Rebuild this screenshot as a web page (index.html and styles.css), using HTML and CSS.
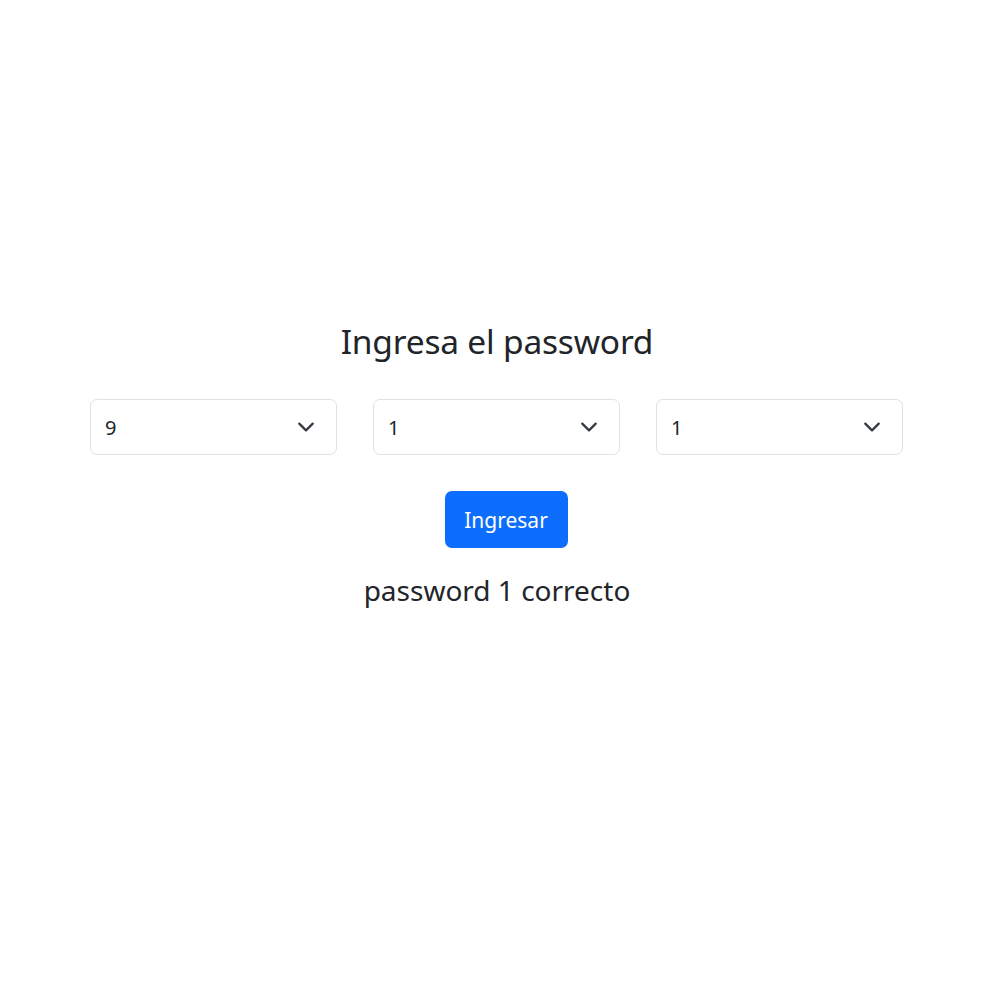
FILE: index.html
```
<!DOCTYPE html>
<html lang="es">
<head>
<meta charset="utf-8">
<link rel="stylesheet" href="styles.css">
</head>
<body>
<main class="page">
  <h2 class="title">Ingresa el password</h2>
  <div class="selects">
    <div class="select"><span>9</span><svg class="chev" viewBox="0 0 16 16" width="18" height="18"><path d="m2 5 6 6 6-6" fill="none" stroke="#343a40" stroke-width="2" stroke-linecap="round" stroke-linejoin="round"/></svg></div>
    <div class="select"><span>1</span><svg class="chev" viewBox="0 0 16 16" width="18" height="18"><path d="m2 5 6 6 6-6" fill="none" stroke="#343a40" stroke-width="2" stroke-linecap="round" stroke-linejoin="round"/></svg></div>
    <div class="select"><span>1</span><svg class="chev" viewBox="0 0 16 16" width="18" height="18"><path d="m2 5 6 6 6-6" fill="none" stroke="#343a40" stroke-width="2" stroke-linecap="round" stroke-linejoin="round"/></svg></div>
  </div>
  <button class="btn">Ingresar</button>
  <p class="msg">password 1 correcto</p>
</main>
</body>
</html>
```
FILE: styles.css
```
html, body { margin: 0; padding: 0; background: #fff; }
body { font-family: "Noto Sans", "Open Sans", sans-serif; color: #212529; }
.page {
  box-sizing: border-box;
  height: 1000px;
  padding: 321px 7px 0 0;
  display: flex;
  flex-direction: column;
  align-items: center;
}
.title {
  margin: 0 0 0 1px;
  font-weight: 400;
  font-size: 33.5px;
  line-height: 40px;
  letter-spacing: -0.2px;
  color: #212529;
}
.selects {
  margin-top: 38px;
  display: flex;
  gap: 36px;
}
.select {
  box-sizing: border-box;
  width: 247px;
  height: 56px;
  border: 1px solid #dee2e6;
  border-radius: 7px;
  display: flex;
  align-items: center;
  justify-content: space-between;
  padding: 0 21px 0 14px;
  font-size: 20px;
  color: #212529;
}
.chev { display: block; }
.btn {
  margin: 36px 0 0 19px;
  box-sizing: border-box;
  width: 123px;
  height: 57px;
  border: none;
  border-radius: 7px;
  background: #0d6efd;
  color: #fff;
  font-family: inherit;
  font-size: 21px;
  padding: 0;
}
.msg {
  margin: 24px 0 0 1px;
  font-size: 28px;
  line-height: 36px;
  color: #212529;
}
```
